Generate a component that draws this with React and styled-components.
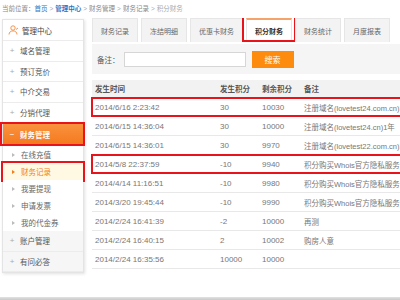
import React from 'react';
import styled, { createGlobalStyle } from 'styled-components';

const Global = createGlobalStyle`
  body { margin: 0; background: #fff; }
`;

const FONT = `"Liberation Sans", "Noto Sans CJK SC", sans-serif`;

const Page = styled.div`
  width: 400px;
  height: 300px;
  overflow: hidden;
  display: flex;
  flex-direction: column;
  font-family: ${FONT};
  color: #666;
`;

const Crumbs = styled.div`
  height: 18px;
  line-height: 17px;
  padding-left: 2px;
  font-size: 6.5px;
  color: #888;
  white-space: nowrap;
`;

const CrumbLink = styled.span`
  color: #2f73c4;
  font-weight: ${p => (p.$bold ? 'bold' : 'normal')};
`;

const Sep = styled.span`
  margin: 0 2px;
  color: #aaa;
`;

const Body = styled.div`
  flex: 1;
  display: flex;
  align-items: flex-start;
  padding-left: 2px;
  gap: 8px;
  overflow: hidden;
`;

const Sidebar = styled.div`
  width: 80px;
  flex-shrink: 0;
  margin-top: 1px;
  border: 1px solid #e4e4e4;
  box-shadow: 1px 1px 3px rgba(0, 0, 0, 0.12);
  background: #fff;
  font-size: 7.5px;
`;

const SideHead = styled.div`
  height: 21px;
  display: flex;
  align-items: center;
  padding-left: 5px;
  gap: 3px;
  color: #444;
  border-bottom: 1px solid #ececec;
  box-sizing: border-box;
`;

const SideItem = styled.div`
  position: relative;
  height: ${p => (p.$active ? '23px' : '20.5px')};
  display: flex;
  align-items: center;
  box-sizing: border-box;
  border-bottom: 1px solid ${p => (p.$active ? '#f08028' : '#ececec')};
  background: ${p =>
    p.$active ? 'linear-gradient(#fa9441, #f4781c)' : p.$gray ? '#f6f6f6' : '#fff'};
  color: ${p => (p.$active ? '#fff' : '#555')};
  font-weight: ${p => (p.$active ? 'bold' : 'normal')};
  &::after {
    content: '';
    display: ${p => (p.$marked ? 'block' : 'none')};
    position: absolute;
    top: -1px;
    left: -3px;
    right: -2px;
    bottom: -1px;
    border: 2px solid #e8141b;
  }
`;

const Mark = styled.span`
  width: 10px;
  margin-left: 4px;
  margin-right: 3px;
  text-align: center;
  color: ${p => (p.$light ? '#fff' : '#aaa')};
  font-size: 8px;
  font-weight: normal;
`;

const SubItem = styled.div`
  position: relative;
  height: 17px;
  display: flex;
  align-items: center;
  padding-left: 9px;
  background: ${p => (p.$active ? '#fff9e4' : '#fff')};
  color: ${p => (p.$active ? '#f37b1c' : '#666')};
  &::before {
    content: '';
    width: 0;
    height: 0;
    margin-right: 6px;
    border-top: 2px solid transparent;
    border-bottom: 2px solid transparent;
    border-left: 3px solid ${p => (p.$active ? '#f37b1c' : '#bbb')};
  }
  &::after {
    content: '';
    display: ${p => (p.$active ? 'block' : 'none')};
    position: absolute;
    top: -2px;
    left: -2px;
    right: -2px;
    bottom: -2px;
    border: 2px solid #e8141b;
  }
`;

const Main = styled.div`
  width: 330px;
  flex-shrink: 0;
`;

const Tabs = styled.div`
  height: 24px;
  display: flex;
  gap: 3px;
`;

const Tab = styled.div`
  position: relative;
  padding: 0 8px;
  display: flex;
  align-items: center;
  font-size: 7px;
  box-sizing: border-box;
  color: ${p => (p.$active ? '#333' : '#666')};
  font-weight: ${p => (p.$active ? 'bold' : 'normal')};
  background: ${p => (p.$active ? '#fff' : '#f3f3f3')};
  border: 1px solid #e6e6e6;
  border-top: ${p => (p.$active ? '2px solid #f5a36b' : '1px solid #e6e6e6')};
  border-bottom: none;
  &::after {
    content: '';
    display: ${p => (p.$active ? 'block' : 'none')};
    position: absolute;
    top: -12px;
    left: -5px;
    right: -5px;
    bottom: 0;
    border: 2px solid #e8141b;
  }
`;

const SearchBar = styled.div`
  margin-top: 2px;
  height: 30px;
  background: #f5f5f5;
  display: flex;
  align-items: center;
  padding-left: 5px;
  font-size: 7.5px;
  color: #555;
`;

const Input = styled.div`
  width: 122px;
  height: 15px;
  margin-left: 4px;
  background: #fff;
  border: 1px solid #d6d6d6;
  box-sizing: border-box;
`;

const Button = styled.div`
  width: 42px;
  height: 17px;
  margin-left: 6px;
  background: #fd8b0e;
  color: #fff;
  font-size: 8px;
  display: flex;
  align-items: center;
  justify-content: center;
`;

const Table = styled.div`
  margin-top: 6px;
`;

const Row = styled.div`
  position: relative;
  display: grid;
  grid-template-columns: 125px 42px 42px 1fr;
  height: ${p => (p.$head ? '18px' : '19px')};
  align-items: center;
  box-sizing: border-box;
  background: ${p => (p.$head ? '#f2f2f2' : '#fff')};
  border-bottom: 1px solid ${p => (p.$head ? '#f2f2f2' : '#e8e8e8')};
  font-size: ${p => (p.$head ? '7.5px' : '8px')};
  font-weight: ${p => (p.$head ? 'bold' : 'normal')};
  color: ${p => (p.$head ? '#555' : '#777')};
  &::after {
    content: '';
    display: ${p => (p.$marked ? 'block' : 'none')};
    position: absolute;
    top: -1px;
    left: -1px;
    right: 0;
    bottom: -1px;
    border: 2px solid #e8141b;
  }
`;

const Cell = styled.div`
  padding-left: 3px;
  white-space: nowrap;
  overflow: hidden;
  font-size: ${p => (p.$note ? '7.5px' : 'inherit')};
`;

const Footer = styled.div`
  height: 3px;
  flex-shrink: 0;
  background: linear-gradient(#e2e2e2, #c9c9c9);
`;

const PersonIcon = () => (
  <svg width="11" height="10" viewBox="0 0 11 10" fill="none">
    <circle cx="5" cy="3" r="2.2" stroke="#f08a3c" strokeWidth="0.9" />
    <path d="M1 9.5c0-2.3 1.8-3.6 4-3.6s4 1.3 4 3.6" stroke="#f08a3c" strokeWidth="0.9" />
    <path d="M8 4.5l2 -1.5" stroke="#f08a3c" strokeWidth="0.9" />
  </svg>
);

const rows = [
  ['2014/6/16 2:23:42', '30', '10030', '注册域名(lovetest24.com.cn)1年', true],
  ['2014/6/15 14:36:04', '30', '10000', '注册域名(lovetest24.cn)1年'],
  ['2014/6/15 14:36:01', '30', '9970', '注册域名(lovetest22.com.cn)1年'],
  ['2014/5/8 22:37:59', '-10', '9940', '积分购买Whois官方隐私服务,', true],
  ['2014/4/14 11:16:51', '-10', '9980', '积分购买Whois官方隐私服务,'],
  ['2014/3/20 19:45:44', '-10', '9990', '积分购买Whois官方隐私服务,'],
  ['2014/2/24 16:41:39', '-2', '10000', '再测'],
  ['2014/2/24 16:40:15', '2', '10002', '购房人意'],
  ['2014/2/24 16:35:56', '10000', '10000', ''],
];

const tabs = ['财务记录', '冻结明细', '优惠卡财务', '积分财务', '财务统计', '月度报表'];

export default function App() {
  return (
    <Page>
      <Global />
      <Crumbs>
        当前位置：<CrumbLink>首页</CrumbLink>
        <Sep>&gt;</Sep>
        <CrumbLink $bold>管理中心</CrumbLink>
        <Sep>&gt;</Sep>财务管理<Sep>&gt;</Sep>财务记录<Sep>&gt;</Sep>
        <span style={{ color: '#aaa' }}>积分财务</span>
      </Crumbs>
      <Body>
        <Sidebar>
          <SideHead>
            <PersonIcon />
            管理中心
          </SideHead>
          <SideItem><Mark>+</Mark>域名管理</SideItem>
          <SideItem><Mark>+</Mark>预订竞价</SideItem>
          <SideItem><Mark>+</Mark>中介交易</SideItem>
          <SideItem><Mark>+</Mark>分销代理</SideItem>
          <SideItem $active $marked><Mark $light>−</Mark>财务管理</SideItem>
          <SubItem>在线充值</SubItem>
          <SubItem $active>财务记录</SubItem>
          <SubItem>我要提现</SubItem>
          <SubItem>申请发票</SubItem>
          <SubItem>我的代金券</SubItem>
          <SideItem $gray><Mark>+</Mark>账户管理</SideItem>
          <SideItem $gray><Mark>+</Mark>有问必答</SideItem>
        </Sidebar>
        <Main>
          <Tabs>
            {tabs.map(t => (
              <Tab key={t} $active={t === '积分财务'}>{t}</Tab>
            ))}
          </Tabs>
          <SearchBar>
            备注：
            <Input />
            <Button>搜索</Button>
          </SearchBar>
          <Table>
            <Row $head>
              <Cell>发生时间</Cell>
              <Cell>发生积分</Cell>
              <Cell>剩余积分</Cell>
              <Cell>备注</Cell>
            </Row>
            {rows.map(([time, pts, left, note, marked]) => (
              <Row key={time} $marked={marked}>
                <Cell>{time}</Cell>
                <Cell>{pts}</Cell>
                <Cell>{left}</Cell>
                <Cell $note>{note}</Cell>
              </Row>
            ))}
          </Table>
        </Main>
      </Body>
      <Footer />
    </Page>
  );
}
